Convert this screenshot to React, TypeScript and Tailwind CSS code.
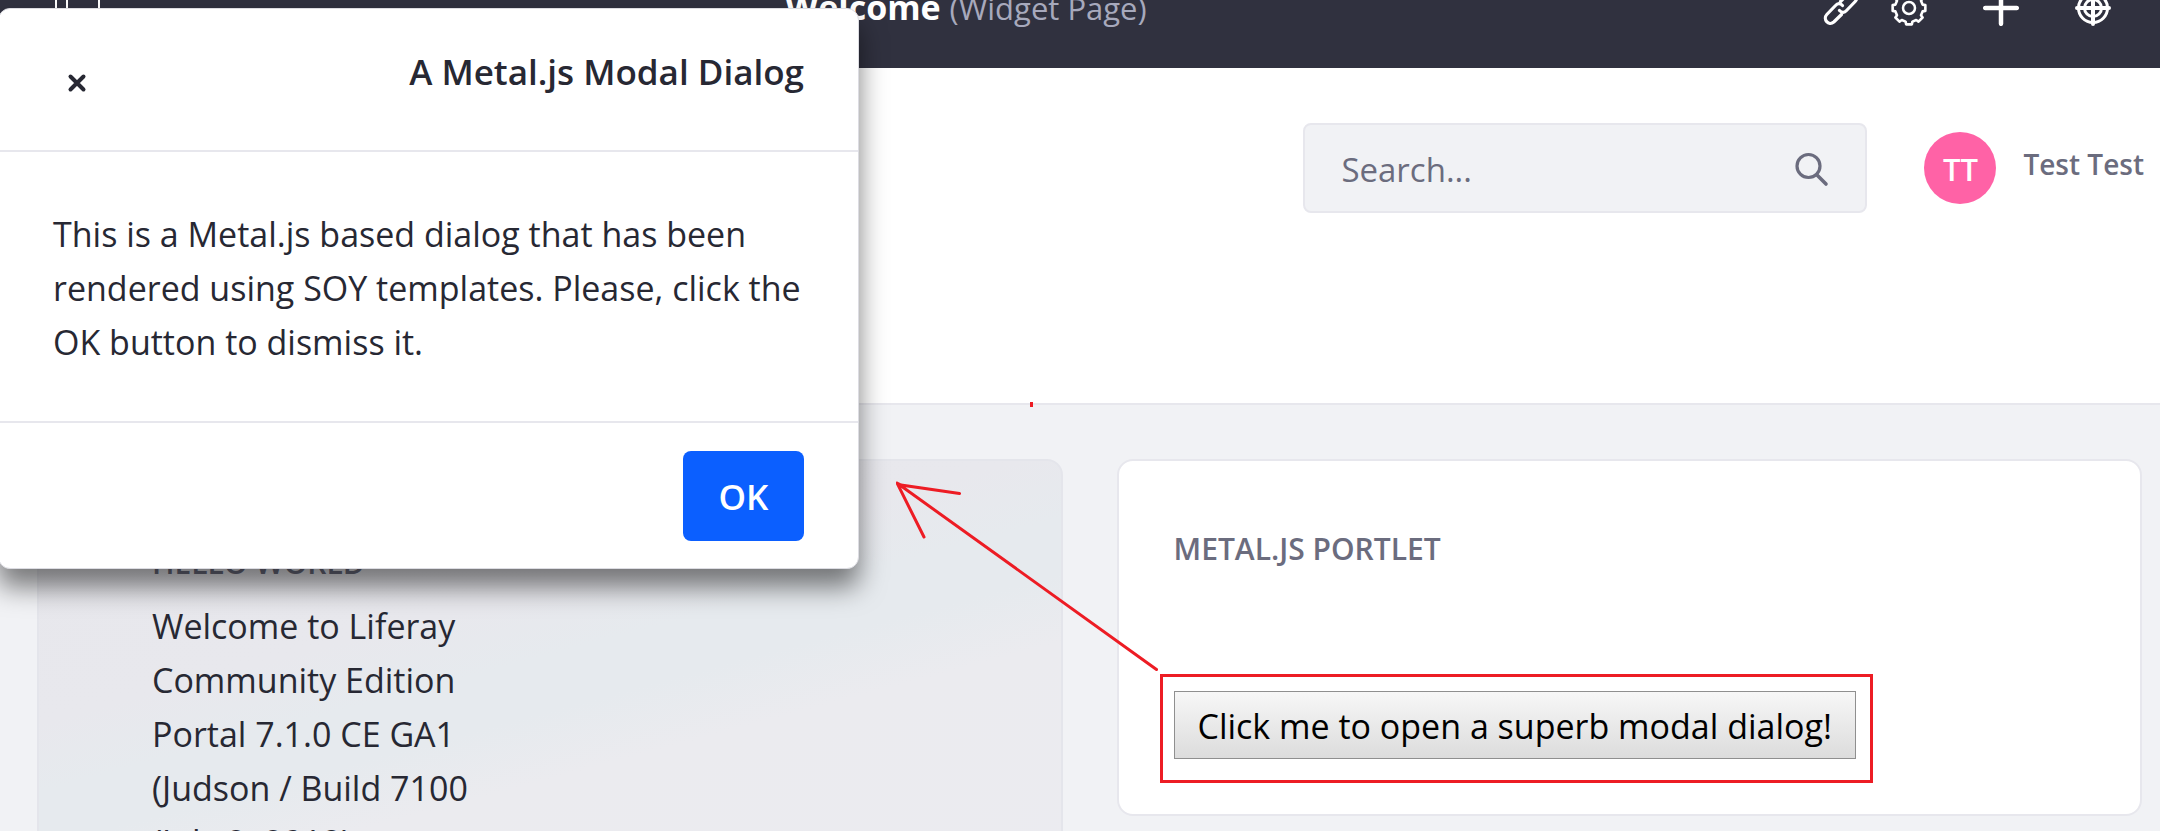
import type { ReactNode } from "react";

function Icon({ children, className }: { children: ReactNode; className: string }) {
  return (
    <svg viewBox="0 0 36 36" fill="none" stroke="currentColor" strokeLinecap="round" strokeLinejoin="round" className={className} aria-hidden="true">
      {children}
    </svg>
  );
}

// Outline of an eight-toothed gear centred in a 36-unit box.
const gearOutline = Array.from({ length: 8 }, (_, tooth) =>
  [
    [-14, 14],
    [-10, 16.6],
    [10, 16.6],
    [14, 14],
  ]
    .map(([degrees, radius]) => {
      const angle = ((tooth * 45 + degrees) * Math.PI) / 180;
      return `${(18 + radius * Math.cos(angle)).toFixed(2)},${(18 + radius * Math.sin(angle)).toFixed(2)}`;
    })
    .join(" "),
).join(" ");

function TopBar() {
  return (
    <nav className="-mt-[52px] flex h-[120px] shrink-0 items-center bg-[#30313f] pr-[49px] pl-[55px] text-white">
      <button type="button" aria-label="Toggle menu" className="shrink-0">
        <svg viewBox="0 0 46 36" className="h-9 w-[46px]" fill="none" stroke="currentColor" strokeWidth="2" aria-hidden="true">
          <rect x="1" y="1" width="43" height="34" />
          <path d="M12 1v34" />
        </svg>
      </button>
      <p className="flex-1 pl-2 pb-0.5 text-center text-[34px] leading-[46px] whitespace-nowrap">
        <strong className="font-bold">Welcome</strong>{" "}
        <span className="text-[31px] text-[#a7a9bc]">(Widget Page)</span>
      </p>
      <div className="flex items-center gap-14">
        <div className="flex items-center gap-8">
          <button type="button" aria-label="Link">
            <Icon className="size-9">
              <g strokeWidth="3.2">
                <path d="M19.500 15.500 C17 12.800 14.500 13.300 12.500 15.500 L3.800 24.500 C-0.500 29 5.500 36.500 10.800 32 L18.500 24.500" />
                <path d="M16.500 20.500 C19 23.200 21.500 22.700 23.500 20.500 L32.200 11.500 C36.500 7 30.500 -0.500 25.200 4 L17.500 11.500" />
              </g>
            </Icon>
          </button>
          <button type="button" aria-label="Settings">
            <Icon className="size-9">
              <circle cx="18" cy="18" r="6" strokeWidth="2.500" />
              <polygon points={gearOutline} strokeWidth="2.600" />
            </Icon>
          </button>
        </div>
        <button type="button" aria-label="Add">
          <Icon className="size-9">
            <path strokeWidth="4.500" d="M18 2.200v31.600M2.200 18h31.600" />
          </Icon>
        </button>
        <button type="button" aria-label="Simulation">
          <Icon className="size-9">
            <circle cx="18" cy="18" r="14.500" strokeWidth="3" />
            <circle cx="18" cy="18" r="8.500" strokeWidth="3" />
            <path strokeWidth="4" d="M18 2v32M2 18h32" />
          </Icon>
        </button>
      </div>
    </nav>
  );
}

function SiteHeader() {
  return (
    <header className="flex h-[337px] shrink-0 items-start justify-end border-b-2 border-[#e7e7ed] bg-white pt-[55px] pr-4">
      <div className="flex items-center">
        <form role="search" className="flex h-[90px] w-[564px] items-center rounded-lg border-2 border-[#e7e7ed] bg-[#f1f2f5] pr-9 pl-9">
          <input
            type="search"
            aria-label="Search"
            placeholder="Search..."
            className="min-w-0 flex-1 bg-transparent pt-1 text-[33px] leading-[54px] outline-none placeholder:text-[#6b6c7e]"
          />
          <button type="button" aria-label="Submit search" className="pt-0.5 text-[#6b6c7e]">
            <Icon className="size-9">
              <circle cx="15.500" cy="15" r="11.500" strokeWidth="3.200" />
              <path strokeWidth="3.600" d="M24 24l9 9" />
            </Icon>
          </button>
        </form>
        <span className="ml-[57px] flex size-[72px] items-center justify-center rounded-full bg-[#ff62a6] pt-0.5 text-[31px] font-semibold text-white">TT</span>
        <a href="#account" className="ml-[27px] pb-2 text-[28px] font-semibold whitespace-nowrap text-[#6b6c7e]">
          Test Test
        </a>
      </div>
    </header>
  );
}

function HelloWorld() {
  return (
    <section className="h-[420px] rounded-2xl border-2 border-[#e4e5eb] bg-[linear-gradient(165deg,#e7e7ec_0%,#e8e8ed_38%,#e6eaee_48%,#e6eaee_56%,#ebebef_66%,#ebebf0_100%)] px-[113px] pt-[78px]">
      <h2 className="text-[30px] leading-[48px] font-semibold whitespace-nowrap text-[#6b6c7e]">HELLO WORLD</h2>
      <p className="w-[350px] pt-3 text-[34px] leading-[54px] text-[#272833]">
        Welcome to Liferay
        <br />
        Community Edition
        <br />
        Portal 7.1.0 CE GA1
        <br />
        (Judson / Build 7100
        <br />
        (July 2, 2018)
      </p>
    </section>
  );
}

function MetalPortlet() {
  return (
    <section className="h-[357px] rounded-2xl border-2 border-[#e7e7ed] bg-white pt-16 pl-[55px]">
      <h2 className="text-[30px] leading-[48px] font-semibold whitespace-nowrap text-[#6b6c7e]">METAL.JS PORTLET</h2>
      <div className="mt-[101px] -ml-[14px] inline-block border-3 border-[#ed1c24] pt-[14px] pr-[14px] pb-[21px] pl-[11px]">
        <button
          type="button"
          className="block h-[68px] border border-[#8f8f8f] bg-linear-to-b from-[#f7f7f7] to-[#dcdcdc] px-[18px] pt-0.5 text-[34px] leading-[54px] whitespace-nowrap text-black sm:px-[23px]"
        >
          Click me to open a superb modal dialog!
        </button>
      </div>
    </section>
  );
}

function ModalDialog() {
  return (
    <div
      role="dialog"
      aria-labelledby="modal-title"
      className="absolute top-2 -left-[2px] w-[861px] rounded-xl border border-[#dcdce2] bg-white text-[34px] leading-[54px] text-[#272833] shadow-[0_18px_27px_rgba(0,0,0,0.5)]"
    >
      <div className="flex h-[143px] items-center justify-between border-b-2 border-[#e7e7ed] px-[54px]">
        <button type="button" aria-label="Close" className="px-[14px] pt-1.5">
          <svg viewBox="0 0 20 20" className="size-5" fill="none" stroke="currentColor" strokeWidth="4" strokeLinecap="round" aria-hidden="true">
            <path d="M3.500 3.500l13 13M16.500 3.500l-13 13" />
          </svg>
        </button>
        <h1 id="modal-title" className="pb-4 text-[35px] font-semibold whitespace-nowrap">
          A Metal.js Modal Dialog
        </h1>
      </div>
      <p className="px-[54px] pt-[55px] pb-[52px]">
        This is a Metal.js based dialog that has been
        <br />
        rendered using SOY templates. Please, click the
        <br />
        OK button to dismiss it.
      </p>
      <div className="flex justify-end border-t-2 border-[#e7e7ed] px-[54px] pt-7 pb-[27px]">
        <button type="button" className="h-[90px] w-[121px] rounded-lg bg-[#0b5fff] pt-0.5 text-[35px] font-semibold text-white">
          OK
        </button>
      </div>
    </div>
  );
}

function Annotation() {
  return (
    <svg viewBox="0 0 262 270" className="pointer-events-none absolute top-[402px] left-[896px] h-[270px] w-[262px]" fill="none" stroke="#ed1c24" strokeWidth="3" strokeLinecap="round" aria-hidden="true">
      <path d="M260.500 267.500L1 81L28 135M1 81L5 83L63.500 91.500" />
      <path d="M135.500 0v5" strokeLinecap="butt" />
    </svg>
  );
}

export default function App() {
  return (
    <div className="relative flex h-screen flex-col overflow-hidden bg-[#f1f2f5] font-['Open_Sans','Noto_Sans',sans-serif]">
      <TopBar />
      <SiteHeader />
      <main className="grid grid-cols-2 items-start gap-[54px] pt-[54px] pr-[18px] pl-[37px]">
        <HelloWorld />
        <MetalPortlet />
      </main>
      <ModalDialog />
      <Annotation />
    </div>
  );
}
